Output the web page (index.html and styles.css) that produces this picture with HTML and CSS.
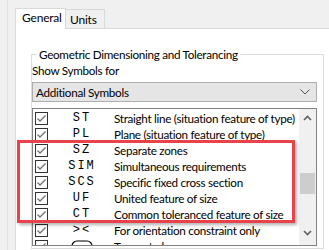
FILE: index.html
```html
<!DOCTYPE html>
<html lang="en">
  <head>
    <meta charset="UTF-8" />
    <title>Options - General</title>
    <link rel="stylesheet" href="styles.css">
  </head>
  <body>
    <div class="frame">
      <div class="tabs">
        <div class="tab active">General</div>
        <div class="tab">Units</div>
      </div>

      <div class="panel">
        <fieldset class="group">
          <legend>Geometric Dimensioning and Tolerancing</legend>
          <div class="label">Show Symbols for</div>
          <div class="combo">
            <span>Additional Symbols</span>
            <svg width="10" height="6" viewBox="0 0 10 6"><polyline points="0.5,0.5 5,5 9.5,0.5" fill="none" stroke="#555" stroke-width="1"/></svg>
          </div>

          <div class="list">
            <div class="rows">
              <div class="row"><span class="check"></span><span class="code">ST</span><span>Straight line (situation feature of type)</span></div>
              <div class="row"><span class="check"></span><span class="code">PL</span><span>Plane (situation feature of type)</span></div>
              <div class="row"><span class="check"></span><span class="code">SZ</span><span>Separate zones</span></div>
              <div class="row"><span class="check"></span><span class="code">SIM</span><span>Simultaneous requirements</span></div>
              <div class="row"><span class="check"></span><span class="code">SCS</span><span>Specific fixed cross section</span></div>
              <div class="row"><span class="check"></span><span class="code">UF</span><span>United feature of size</span></div>
              <div class="row"><span class="check"></span><span class="code">CT</span><span>Common toleranced feature of size</span></div>
              <div class="row"><span class="check"></span><span class="code">&gt;&lt;</span><span>For orientation constraint only</span></div>
              <div class="row"><span class="check"></span><span class="code"><svg width="22" height="12" viewBox="0 0 22 12"><rect x="1" y="1" width="20" height="10" rx="5" fill="none" stroke="#000" stroke-width="1.2"/></svg></span><span>Tangent plane</span></div>
            </div>
            <div class="scrollbar">
              <div class="arrow"><svg width="9" height="6" viewBox="0 0 9 6"><polyline points="1,5 4.5,1.5 8,5" fill="none" stroke="#606060" stroke-width="1.6"/></svg></div>
              <div class="track"><div class="thumb"></div></div>
              <div class="arrow down"><svg width="9" height="6" viewBox="0 0 9 6"><polyline points="1,1 4.5,4.5 8,1" fill="none" stroke="#606060" stroke-width="1.6"/></svg></div>
            </div>
          </div>
        </fieldset>
      </div>
    </div>

    <!-- highlight drawn over the list -->
    <div class="highlight"></div>
  </body>
</html>
```

FILE: styles.css
```css
body {
  margin: 0;
  background: #f0f0f0;
  font-family: "Lato", "Liberation Sans", sans-serif;
  font-size: 11.7px;
  letter-spacing: -0.3px;
  color: #000;
  overflow: hidden;
  height: 250px;
}
.frame {
  margin-left: 7px;
  border-left: 1px solid #e2e2e2;
  padding: 7px 0 0 7px;
  height: 243px;
}
.tabs {
  display: flex;
  align-items: flex-end;
  height: 21px;
}
.tab {
  box-sizing: border-box;
  height: 19px;
  padding: 0 4px;
  width: 39px;
  line-height: 19px;
  font-size: 12px;
  letter-spacing: -0.2px;
  background: #f0f0f0;
  border: 1px solid #d9d9d9;
  border-left: none;
  border-bottom: none;
}
.tab.active {
  width: 51px;
  height: 21px;
  padding: 0 6px;
  line-height: 18px;
  background: #fff;
  border-left: 1px solid #d9d9d9;
  position: relative;
  z-index: 1;
  margin-bottom: -1px;
}
.panel {
  background: #fff;
  border: 1px solid #d9d9d9;
  border-right: none;
  border-bottom: none;
  padding: 17px 0 0 15px;
  height: 221px;
  overflow: hidden;
}
.group {
  margin: 0;
  padding: 0 6px 2px 0;
  border: 1px solid #dcdcdc;
  width: 285px;
  min-width: 0;
}
.group legend {
  padding: 0 2px;
  margin-left: 5px;
  line-height: 16px;
}
.label {
  line-height: 16px;
}
.combo {
  margin-top: 4px;
  height: 20px;
  box-sizing: border-box;
  border: 1px solid #adadad;
  background: #e5e5e5;
  display: flex;
  align-items: center;
  justify-content: space-between;
  padding: 0 6px 0 3px;
}
.list {
  margin-top: 6px;
  height: 138px;
  box-sizing: border-box;
  border: 1px solid #828282;
  display: flex;
  overflow: hidden;
}
.rows {
  flex: 1;
  padding: 1px 0 0 2px;
  overflow: hidden;
}
.row {
  display: grid;
  grid-template-columns: 13px 66px 1fr;
  align-items: center;
  height: 16px;
  white-space: nowrap;
}
.check {
  box-sizing: border-box;
  width: 13px;
  height: 13px;
  border: 1px solid #333;
  background: #fff url("data:image/svg+xml,%3Csvg xmlns='http://www.w3.org/2000/svg' width='11' height='11'%3E%3Cpolyline points='1.5,5.5 4,8 9.5,2.5' fill='none' stroke='%23707070' stroke-width='1.3'/%3E%3C/svg%3E") no-repeat center;
}
.code {
  text-align: center;
  font-family: "Liberation Mono", monospace;
  font-size: 12px;
  letter-spacing: 2px;
  padding-left: 2px;
}
.code svg {
  display: inline-block;
  vertical-align: middle;
}
.scrollbar {
  width: 17px;
  background: #f0f0f0;
  display: flex;
  flex-direction: column;
}
.arrow {
  height: 17px;
  display: flex;
  align-items: center;
  justify-content: center;
}
.arrow.down {
  margin-bottom: 4px;
}
.track {
  flex: 1;
  padding: 47px 1px 0 1px;
}
.thumb {
  height: 21px;
  background: #cdcdcd;
}
.highlight {
  position: absolute;
  left: 17px;
  top: 140px;
  width: 272px;
  height: 77px;
  border: 3px solid #e8424a;
  box-shadow: 2px 2px 3px rgba(0, 0, 0, 0.3);
}
```
